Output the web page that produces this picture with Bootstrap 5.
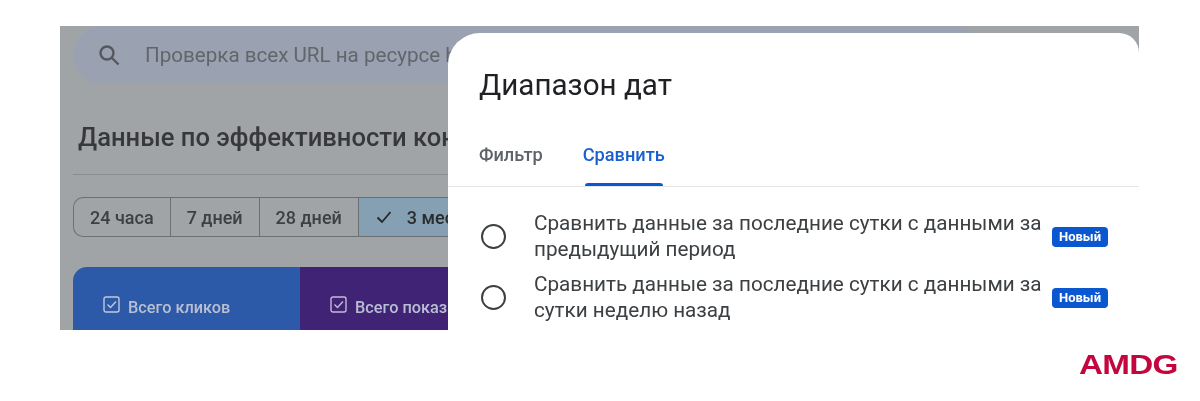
<!DOCTYPE html>
<html lang="ru">
<head>
<meta charset="utf-8">
<title>Диапазон дат</title>
<link href="https://cdn.jsdelivr.net/npm/bootstrap@5.3.0/dist/css/bootstrap.min.css" rel="stylesheet">
<style>
html,body{height:401px;overflow:hidden;background:#fff;font-family:Roboto,"Liberation Sans",sans-serif}
.stage{height:401px;padding:26px 61px 0 60px}
.frame{height:304px;background:#a1a4a7;overflow:hidden;padding:0 0 0 13px;filter:blur(.4px)}
.searchbar{height:58px;width:908px;background:#9aa2b1;border-radius:29px;padding-left:24px;color:#62666b;font-size:20.6px;gap:24px;white-space:nowrap;overflow:hidden}
.pagehead{font-size:25.6px;font-weight:500;color:#38383a;margin:38px 0 0 5px;line-height:30px;white-space:nowrap}
.rule{height:1px;background:#8a8c8f;margin:22px 0 22px}
.chips{height:40px;border:1px solid #6d6f72;border-radius:10px 0 0 10px;border-right:0;font-size:18px;font-weight:500;color:#3e3f41;width:400px;overflow:hidden}
.chip{height:100%;padding:0 16px;border-right:1px solid #6d6f72;white-space:nowrap}
.chip-on{background:#84a0b2;color:#2a2c2e;flex:1;gap:15px;padding-left:17px}
.tiles{margin-top:30px;height:63px;border-radius:14px 0 0 0;overflow:hidden;font-size:16.3px;font-weight:500;color:#b9bfd2}
.tile{padding-top:29px;padding-left:30px;gap:7px;white-space:nowrap;height:100%}
.tile-blue{width:227px;background:#2d5aa8}
.tile-purple{flex:1;background:#412376}
.dialog{position:absolute;left:388px;top:7px;right:0;height:297px;background:#fff;border-radius:32px 20px 0 0;overflow:hidden}
.dlg-title{font-size:29.6px;font-weight:400;color:#202124;line-height:36px;margin:34px 0 0 31px}
.tabs{height:64px;border-bottom:1px solid #e3e5e8;padding-left:31px;gap:40px;margin-top:20px}
.tabitem{font-size:18.2px;font-weight:500;color:#5f6368;height:100%;padding-top:18px;position:relative}
.tabitem.on{color:#1a5fd0}
.tabitem.on::after{content:"";position:absolute;left:2px;right:2px;bottom:0;height:3px;background:#0b57d0;border-radius:3px 3px 0 0}
.optlist{padding:24px 31px 0 33px;gap:10px}
.ring{width:25px;height:25px;border:2.5px solid #3c4043;border-radius:50%;flex:none}
.opttext{font-size:20.7px;line-height:25.5px;color:#3c4043;width:520px;margin-left:28px;flex:none}
.tagnew{background:#0b57d0;color:#fff;font-size:13px;font-weight:700;border-radius:4px;width:57px;height:20px;line-height:20px;margin-left:-2px;text-align:center}
.brand{position:absolute;left:1079px;top:352px;font-family:"Liberation Sans",sans-serif;font-weight:700;font-size:27px;line-height:27px;color:#c4063f;transform:scaleX(1.23);transform-origin:0 0;letter-spacing:-.6px}
</style>
</head>
<body class="position-relative">
<div class="stage">
  <div class="frame position-relative">
    <div class="searchbar d-flex align-items-center">
      <svg width="24" height="24" viewBox="0 0 24 24" fill="none" stroke="#55585c" stroke-width="2.4" aria-hidden="true"><circle cx="10" cy="10" r="6.5"/><path d="M15 15l6.5 6.5"/></svg>
      <span>Проверка всех URL на ресурсе h</span>
    </div>
    <div class="pagehead">Данные по эффективности кон</div>
    <div class="rule"></div>
    <div class="chips d-flex">
      <div class="chip d-flex align-items-center">24 часа</div>
      <div class="chip d-flex align-items-center">7 дней</div>
      <div class="chip d-flex align-items-center">28 дней</div>
      <div class="chip chip-on d-flex align-items-center">
        <svg width="16" height="14" viewBox="0 0 16 14" fill="none" stroke="#25272a" stroke-width="1.8" aria-hidden="true"><path d="M1.5 7.5l4.5 4.5 8.5-10"/></svg>
        <span>3 мес</span>
      </div>
    </div>
    <div class="tiles d-flex">
      <div class="tile tile-blue d-flex align-items-start">
        <svg width="18" height="18" viewBox="0 0 18 18" fill="none" stroke="#c3c8da" stroke-width="1.4" aria-hidden="true"><rect x="1" y="1" width="15" height="15" rx="2"/><path d="M4.5 8.5l3 3 5.5-6"/></svg>
        <span>Всего кликов</span>
      </div>
      <div class="tile tile-purple d-flex align-items-start">
        <svg width="18" height="18" viewBox="0 0 18 18" fill="none" stroke="#c3bcd6" stroke-width="1.4" aria-hidden="true"><rect x="1" y="1" width="15" height="15" rx="2"/><path d="M4.5 8.5l3 3 5.5-6"/></svg>
        <span>Всего показ</span>
      </div>
    </div>
    <div class="dialog">
      <div class="dlg-title">Диапазон дат</div>
      <div class="tabs d-flex">
        <div class="tabitem">Фильтр</div>
        <div class="tabitem on">Сравнить</div>
      </div>
      <div class="optlist d-flex flex-column">
        <div class="d-flex align-items-center">
          <span class="ring"></span>
          <div class="opttext">Сравнить данные за последние сутки с данными за предыдущий период</div>
          <span class="tagnew">Новый</span>
        </div>
        <div class="d-flex align-items-center">
          <span class="ring"></span>
          <div class="opttext">Сравнить данные за последние сутки с данными за сутки неделю назад</div>
          <span class="tagnew">Новый</span>
        </div>
      </div>
    </div>
  </div>
</div>
<div class="brand">AMDG</div>
<script src="https://cdn.jsdelivr.net/npm/bootstrap@5.3.0/dist/js/bootstrap.bundle.min.js"></script>
</body>
</html>
